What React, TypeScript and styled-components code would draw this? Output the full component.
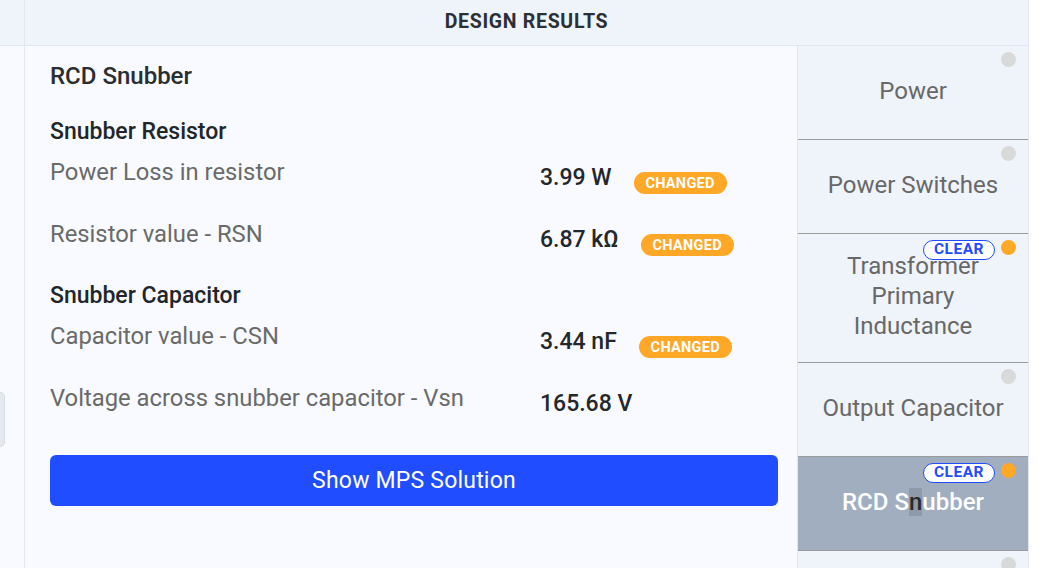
import React from "react";
import styled, { createGlobalStyle } from "styled-components";

const GlobalStyle = createGlobalStyle`
  html, body { margin: 0; padding: 0; background: #ffffff; }
  body { font-family: Roboto, "Noto Sans", "Liberation Sans", sans-serif; }
  * { box-sizing: border-box; }
`;

const Page = styled.div`
  display: flex;
  width: 1047px;
  height: 568px;
  overflow: hidden;
  background: #ffffff;
`;

const Rail = styled.div`
  width: 25px;
  flex: none;
  display: flex;
  flex-direction: column;
  border-right: 1px solid #e1e7ef;
  background: #f8faff;
`;

const RailCap = styled.div`
  height: 46px;
  background: #eff3fa;
  border-bottom: 1px solid #e1e7ef;
`;

const RailHandle = styled.div`
  margin-top: 346px;
  width: 5px;
  height: 55px;
  background: #e5e9ef;
  border: 1px solid #d6dce3;
  border-left: none;
  border-radius: 0 5px 5px 0;
`;

const Main = styled.div`
  width: 1004px;
  flex: none;
  display: flex;
  flex-direction: column;
  border-right: 1px solid #e4e9f0;
`;

const Header = styled.div`
  height: 46px;
  flex: none;
  display: flex;
  align-items: center;
  justify-content: center;
  padding-bottom: 2px;
  background: #eff3fa;
  border-bottom: 1px solid #e1e7ef;
  font-size: 19.5px;
  font-weight: 700;
  letter-spacing: 0.7px;
  color: #2b3036;
  text-transform: uppercase;
`;

const Body = styled.div`
  flex: 1;
  display: flex;
  min-height: 0;
`;

const Content = styled.div`
  width: 772px;
  flex: none;
  background: #f8faff;
  padding: 15px 19px 0 25px;
  display: flex;
  flex-direction: column;
`;

const Title = styled.div`
  font-size: 24px;
  line-height: 30px;
  font-weight: 500;
  color: #2a2d31;
`;

const Section = styled.div<{ $first?: boolean }>`
  display: flex;
  flex-direction: column;
  margin-top: ${(p) => (p.$first ? "26px" : "0")};
`;

const SectionTitle = styled.div`
  font-size: 23px;
  line-height: 30px;
  font-weight: 500;
  color: #222529;
  margin-bottom: 10px;
`;

const Row = styled.div`
  display: grid;
  grid-template-columns: 490px auto;
  min-height: 62px;
`;

const Label = styled.div`
  font-size: 23.8px;
  line-height: 30px;
  color: #6a6a6a;
`;

const ValueCell = styled.div`
  display: flex;
  align-items: flex-start;
`;

const Value = styled.div`
  padding-top: 9px;
  font-size: 23px;
  line-height: 24px;
  font-weight: 500;
  color: #24272b;
`;

const Changed = styled.span`
  margin-top: 15px;
  margin-left: 22px;
  height: 22px;
  width: 93px;
  display: inline-flex;
  align-items: center;
  justify-content: center;
  border-radius: 11px;
  background: #ffa726;
  color: #ffffff;
  font-size: 14.5px;
  font-weight: 700;
  letter-spacing: 0.3px;
`;

const PrimaryButton = styled.button`
  margin-top: 10px;
  height: 51px;
  width: 100%;
  border: none;
  border-radius: 6px;
  background: #1f4dff;
  color: #ffffff;
  font-family: inherit;
  font-size: 23px;
  font-weight: 400;
  letter-spacing: 0.2px;
  cursor: pointer;
`;

const Sidebar = styled.div`
  flex: 1;
  display: flex;
  flex-direction: column;
  background: #eff3fa;
  border-left: 1px solid #e1e7ef;
`;

const NavItem = styled.div<{ $active?: boolean }>`
  position: relative;
  min-height: 94px;
  padding: 17px 6px 21px;
  display: flex;
  align-items: center;
  justify-content: center;
  text-align: center;
  border-bottom: 1px solid #9b9b9b;
  background: ${(p) => (p.$active ? "#a0aec0" : "transparent")};
  color: ${(p) => (p.$active ? "#ffffff" : "#686868")};
  font-size: 24px;
  font-weight: ${(p) => (p.$active ? 500 : 400)};
  line-height: 30px;
  flex: none;
`;

const Dot = styled.span<{ $on?: boolean }>`
  position: absolute;
  top: 6px;
  right: 12px;
  width: 15px;
  height: 15px;
  border-radius: 50%;
  background: ${(p) => (p.$on ? "#ffa726" : "#d9d9d9")};
`;

const ClearBadge = styled.span`
  position: absolute;
  top: 6px;
  right: 33px;
  width: 72px;
  height: 20px;
  border: 1.5px solid #1f4dff;
  border-radius: 10px;
  background: #ffffff;
  color: #1f4dff;
  font-size: 15.5px;
  font-weight: 700;
  letter-spacing: 0.5px;
  line-height: 17px;
  text-align: center;
`;

const Caret = styled.span`
  background: #8e9aaa;
  color: #2a2a2a;
`;

type R = { label: string; value: string; changed: boolean };

const rows1: R[] = [
  { label: "Power Loss in resistor", value: "3.99 W", changed: true },
  { label: "Resistor value - RSN", value: "6.87 kΩ", changed: true },
];
const rows2: R[] = [
  { label: "Capacitor value - CSN", value: "3.44 nF", changed: true },
  { label: "Voltage across snubber capacitor - Vsn", value: "165.68 V", changed: false },
];

const ResultRow = ({ r }: { r: R }) => (
  <Row>
    <Label>{r.label}</Label>
    <ValueCell>
      <Value>{r.value}</Value>
      {r.changed && <Changed>CHANGED</Changed>}
    </ValueCell>
  </Row>
);

export default function App() {
  return (
    <>
      <GlobalStyle />
      <Page>
        <Rail>
          <RailCap />
          <RailHandle />
        </Rail>
        <Main>
          <Header>Design Results</Header>
          <Body>
            <Content>
              <Title>RCD Snubber</Title>
              <Section $first>
                <SectionTitle>Snubber Resistor</SectionTitle>
                {rows1.map((r) => (
                  <ResultRow key={r.label} r={r} />
                ))}
              </Section>
              <Section>
                <SectionTitle>Snubber Capacitor</SectionTitle>
                {rows2.map((r) => (
                  <ResultRow key={r.label} r={r} />
                ))}
              </Section>
              <PrimaryButton>Show MPS Solution</PrimaryButton>
            </Content>
            <Sidebar>
              <NavItem>
                Power
                <Dot />
              </NavItem>
              <NavItem>
                Power Switches
                <Dot />
              </NavItem>
              <NavItem>
                Transformer
                <br />
                Primary
                <br />
                Inductance
                <ClearBadge>CLEAR</ClearBadge>
                <Dot $on />
              </NavItem>
              <NavItem>
                Output Capacitor
                <Dot />
              </NavItem>
              <NavItem $active>
                <span>
                  RCD S<Caret>n</Caret>ubber
                </span>
                <ClearBadge>CLEAR</ClearBadge>
                <Dot $on />
              </NavItem>
              <NavItem>
                <Dot />
              </NavItem>
            </Sidebar>
          </Body>
        </Main>
      </Page>
    </>
  );
}
